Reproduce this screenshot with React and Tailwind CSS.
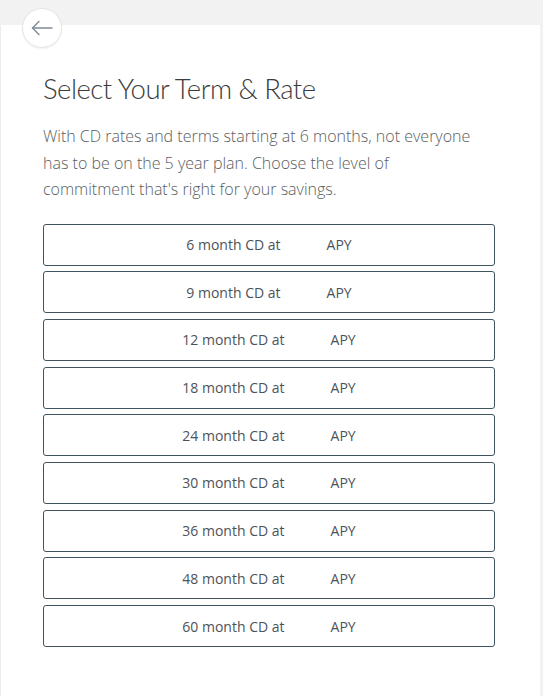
import React from "react";

const terms = [6, 9, 12, 18, 24, 30, 36, 48, 60];

export default function App() {
  return (
    <div
      className="w-[543px] h-[696px] bg-[#f2f2f2] pt-[25px] overflow-hidden"
      style={{ fontFamily: '"Open Sans", "Liberation Sans", sans-serif' }}
    >
      <div className="bg-white w-[540px] h-[671px] flex flex-col border-l border-[#ececec]">
        <button className="-mt-[17px] ml-[21px] w-[40px] h-[40px] rounded-full bg-white border border-[#e4e6e7] shadow-[0_1px_2px_rgba(0,0,0,0.06)] flex items-center justify-center">
          <svg width="22" height="16" viewBox="0 0 22 16" fill="none" stroke="#7d8c96" strokeWidth="1.4" strokeLinecap="round" strokeLinejoin="round">
            <path d="M21 8H1.5" />
            <path d="M8 1.5L1.5 8L8 14.5" />
          </svg>
        </button>
        <div className="px-[42px] pt-[23px]">
          <h1
            className="text-[27.5px] leading-[36px] font-light text-[#3a3c3e] tracking-[-0.5px]"
            style={{ fontFamily: 'Lato, "Open Sans", sans-serif' }}
          >
            Select Your Term &amp; Rate
          </h1>
          <p className="mt-[16px] w-[436px] text-[16px] leading-[26.5px] font-light text-[#5a5e61]">
            With CD rates and terms starting at 6 months, not everyone has to be on the 5 year plan. Choose the level of commitment that's right for your savings.
          </p>
          <div className="mt-[21px] flex flex-col gap-[5.7px] w-[452px]">
            {terms.map((t) => (
              <div
                key={t}
                className="h-[42px] rounded-[3px] border border-[#3f5460] flex items-center justify-center text-[14px] text-[#4c5358]"
              >
                <span>{t} month CD at</span>
                <span className="inline-block w-[46px]" />
                <span>APY</span>
              </div>
            ))}
          </div>
        </div>
      </div>
    </div>
  );
}
